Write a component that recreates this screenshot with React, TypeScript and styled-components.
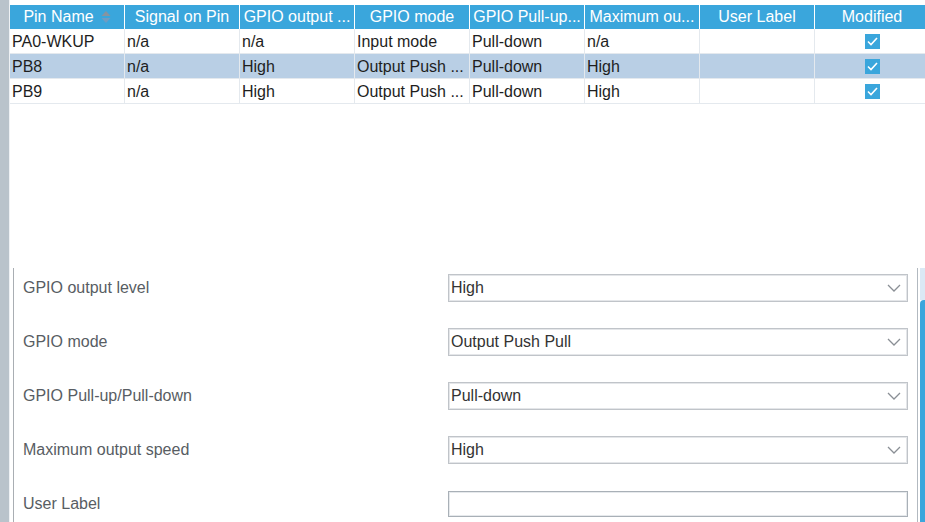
import React, { FC } from 'react';
import styled, { createGlobalStyle } from 'styled-components';

const GlobalStyle = createGlobalStyle`
  html, body {
    margin: 0;
    padding: 0;
    background: #ffffff;
    font-family: 'Liberation Sans', Arial, sans-serif;
    overflow: hidden;
  }
`;

const Page = styled.div`
  display: flex;
  width: 925px;
  height: 522px;
  overflow: hidden;
`;

const SideStrip = styled.div`
  width: 9px;
  flex-shrink: 0;
  background: #b9c3cb;
  border-right: 1px solid #eef1f4;
`;

const Main = styled.div`
  flex: 1;
  display: flex;
  flex-direction: column;
  min-width: 0;
`;

const TableArea = styled.div`
  padding-top: 5px;
  height: 268px;
  flex-shrink: 0;
  box-sizing: border-box;
  overflow: hidden;
`;

const Grid = styled.div`
  display: grid;
  grid-template-columns: repeat(8, 115px);
  width: 920px;
`;

const HeadCell = styled.div`
  height: 24px;
  background: #3aa6dc;
  color: #ffffff;
  font-size: 16px;
  line-height: 24px;
  text-align: center;
  white-space: nowrap;
  overflow: hidden;
  border-right: 1px solid #ffffff;
  display: flex;
  align-items: center;
  justify-content: center;
  gap: 7px;
`;

const Cell = styled.div<{ $selected?: boolean; $center?: boolean }>`
  height: 24px;
  background: ${(p) => (p.$selected ? '#b9cfe5' : '#ffffff')};
  border-right: 1px solid #e4e9ee;
  border-bottom: 1px solid #e4e9ee;
  color: #1e1e1e;
  font-size: 16px;
  line-height: 25px;
  padding-left: 2px;
  white-space: nowrap;
  overflow: hidden;
  display: flex;
  align-items: center;
  justify-content: ${(p) => (p.$center ? 'center' : 'flex-start')};
`;

const Check = styled.span`
  width: 15px;
  height: 15px;
  background: #3aa6dc;
  display: inline-flex;
  align-items: center;
  justify-content: center;
  margin-left: -2px;
`;

const Lower = styled.div`
  flex: 1;
  display: flex;
`;

const FormPanel = styled.div`
  margin-left: 3px;
  border-left: 1px solid #a9aeb3;
  padding: 6px 0 0 9px;
  width: 893px;
  box-sizing: border-box;
  display: grid;
  grid-template-columns: 425px 460px;
  grid-auto-rows: 28px;
  row-gap: 26px;
  align-items: center;
`;

const Label = styled.div`
  color: #585d63;
  font-size: 16px;
`;

const Select = styled.div`
  height: 28px;
  box-sizing: border-box;
  border: 1px solid #c0c4c9;
  box-shadow: inset 0 0 0 1px #e4e6e9;
  background: #ffffff;
  color: #333333;
  font-size: 16px;
  display: flex;
  align-items: center;
  justify-content: space-between;
  padding: 0 6px 0 2px;
`;

const TextInput = styled.div`
  height: 26px;
  box-sizing: border-box;
  border: 1px solid #a9b0b7;
  box-shadow: inset 0 0 0 1px #e6e9ec;
  background: #ffffff;
  align-self: start;
  margin-top: 1px;
`;

const ScrollBar = styled.div`
  margin-left: 11px;
  border-left: 1px solid #b2b9c0;
  padding-left: 2px;
  display: flex;
  flex-direction: column;
  width: 6px;
`;

const Track = styled.div`
  height: 32px;
  background: #dbe9f5;
`;

const Thumb = styled.div`
  flex: 1;
  background: #3aa6dc;
  border-top-left-radius: 4px;
`;

const SortIcon: FC = () => (
  <svg width="10" height="14" viewBox="0 0 10 14">
    <path d="M5 1 L9.5 6 L0.5 6 Z" fill="#8794a0" />
    <path d="M5 13 L9.5 8 L0.5 8 Z" fill="#6f9cc2" />
  </svg>
);

const Chevron: FC = () => (
  <svg width="14" height="8" viewBox="0 0 14 8">
    <path d="M1 1 L7 7 L13 1" fill="none" stroke="#8a8f95" strokeWidth="1.3" />
  </svg>
);

const CheckMark: FC = () => (
  <svg width="11" height="9" viewBox="0 0 11 9">
    <path d="M1 4.5 L4 7.5 L10 1" fill="none" stroke="#ffffff" strokeWidth="1.6" />
  </svg>
);

const headers = [
  'Pin Name',
  'Signal on Pin',
  'GPIO output ...',
  'GPIO mode',
  'GPIO Pull-up...',
  'Maximum ou...',
  'User Label',
  'Modified',
];

const rows = [
  ['PA0-WKUP', 'n/a', 'n/a', 'Input mode', 'Pull-down', 'n/a', ''],
  ['PB8', 'n/a', 'High', 'Output Push ...', 'Pull-down', 'High', ''],
  ['PB9', 'n/a', 'High', 'Output Push ...', 'Pull-down', 'High', ''],
];

const fields = [
  { label: 'GPIO output level', value: 'High' },
  { label: 'GPIO mode', value: 'Output Push Pull' },
  { label: 'GPIO Pull-up/Pull-down', value: 'Pull-down' },
  { label: 'Maximum output speed', value: 'High' },
];

const App: FC = () => {
  return (
    <>
      <GlobalStyle />
      <Page>
        <SideStrip />
        <Main>
          <TableArea>
            <Grid>
              {headers.map((h, i) => (
                <HeadCell key={h}>
                  {h}
                  {i === 0 && <SortIcon />}
                </HeadCell>
              ))}
              {rows.map((r, ri) =>
                [
                  ...r.map((c, ci) => (
                    <Cell key={`${ri}-${ci}`} $selected={ri === 1}>
                      {c}
                    </Cell>
                  )),
                  <Cell key={`${ri}-m`} $selected={ri === 1} $center>
                    <Check>
                      <CheckMark />
                    </Check>
                  </Cell>,
                ]
              )}
            </Grid>
          </TableArea>
          <Lower>
            <FormPanel>
              {fields.map((f) => (
                <React.Fragment key={f.label}>
                  <Label>{f.label}</Label>
                  <Select>
                    {f.value}
                    <Chevron />
                  </Select>
                </React.Fragment>
              ))}
              <Label>User Label</Label>
              <TextInput />
            </FormPanel>
            <ScrollBar>
              <Track />
              <Thumb />
            </ScrollBar>
          </Lower>
        </Main>
      </Page>
    </>
  );
};

export default App;
